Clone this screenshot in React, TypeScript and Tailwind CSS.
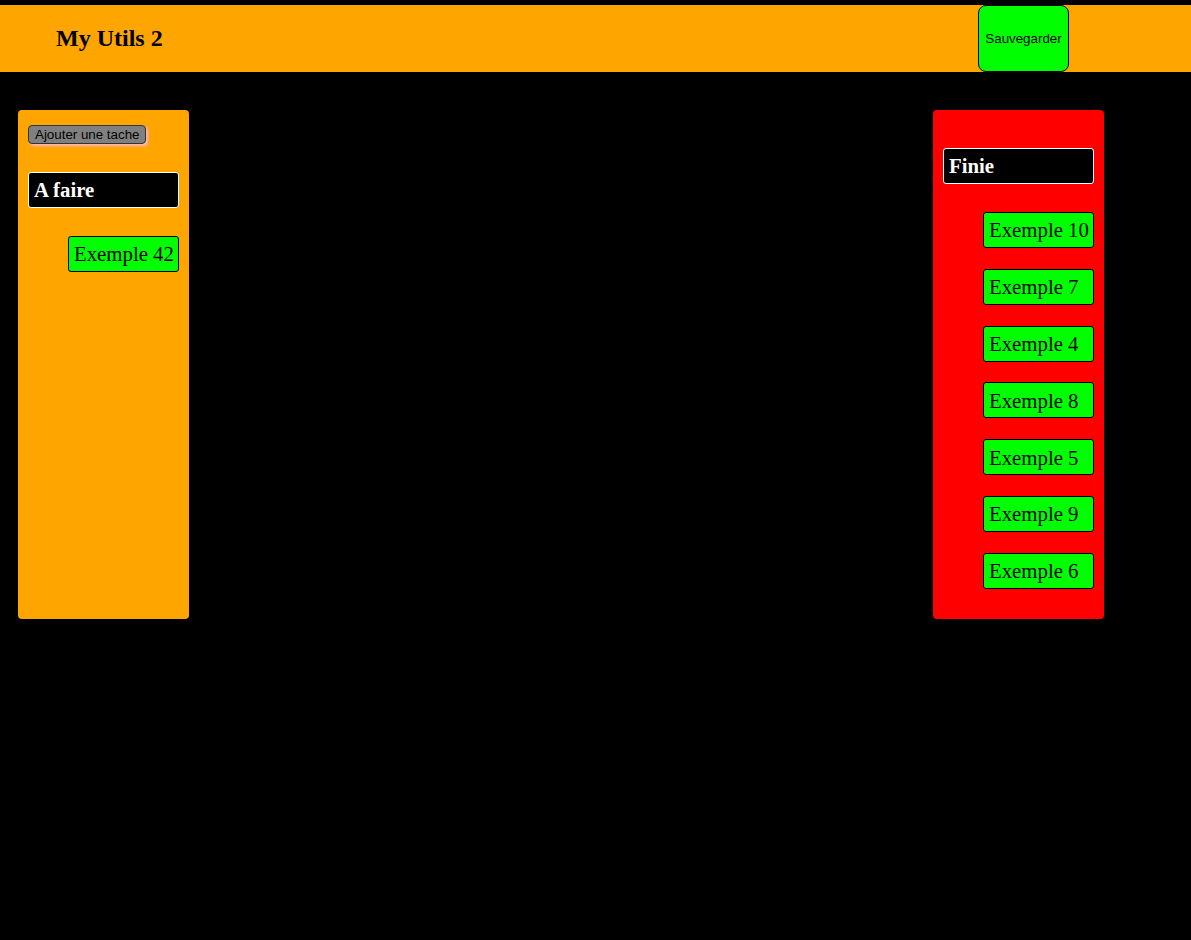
const aFaire = ["Exemple 42"];
const finie = [
  "Exemple 10",
  "Exemple 7",
  "Exemple 4",
  "Exemple 8",
  "Exemple 5",
  "Exemple 9",
  "Exemple 6",
];

const serif = { fontFamily: '"Liberation Serif", "Times New Roman", serif' };
const sans = { fontFamily: '"Liberation Sans", Arial, sans-serif' };

const Task = ({ name }: { name: string }) => (
  <div className="ml-10 w-[111px] h-[36px] shrink-0 flex items-center px-[5px] bg-[#00ff00] border border-black rounded-[3px] text-[20.8px] text-black whitespace-nowrap">
    {name}
  </div>
);

const Title = ({ label }: { label: string }) => (
  <div className="w-[151px] h-9 flex items-center px-[5px] bg-black border border-white rounded-[3px] text-[20.8px] font-bold text-white">
    {label}
  </div>
);

export default function App() {
  return (
    <div className="min-h-[940px] bg-black pt-[5px]" style={serif}>
      <header className="h-[67px] bg-[#ffa500] flex items-center">
        <h1 className="ml-14 mb-[2px] text-[24px] font-bold text-black">My Utils 2</h1>
        <button
          className="ml-auto mr-[122px] h-[67px] w-[91px] bg-[#00ff00] border border-black rounded-lg text-[13.333px] text-black"
          style={sans}
        >
          Sauvegarder
        </button>
      </header>

      <main className="flex justify-between pl-[18px] pr-[87px] mt-[38px]">
        <section className="w-[171px] h-[509px] bg-[#ffa500] rounded-[4px] p-[10px] pt-[15px] flex flex-col">
          <button
            className="self-start h-[19px] px-[6px] bg-[#808080] border border-[#333] rounded-[4px] text-[13.333px] leading-none text-black shadow-[2px_2px_3px_#ffb6c1]"
            style={sans}
          >
            Ajouter une tache
          </button>
          <div className="mt-7">
            <Title label="A faire" />
          </div>
          <div className="mt-7 flex flex-col gap-[20.8px]">
            {aFaire.map((t) => (
              <Task key={t} name={t} />
            ))}
          </div>
        </section>

        <section className="w-[171px] h-[509px] bg-[#ff0000] rounded-[4px] p-[10px] pt-[38px] flex flex-col">
          <Title label="Finie" />
          <div className="mt-7 flex flex-col gap-[20.8px]">
            {finie.map((t) => (
              <Task key={t} name={t} />
            ))}
          </div>
        </section>
      </main>
    </div>
  );
}
